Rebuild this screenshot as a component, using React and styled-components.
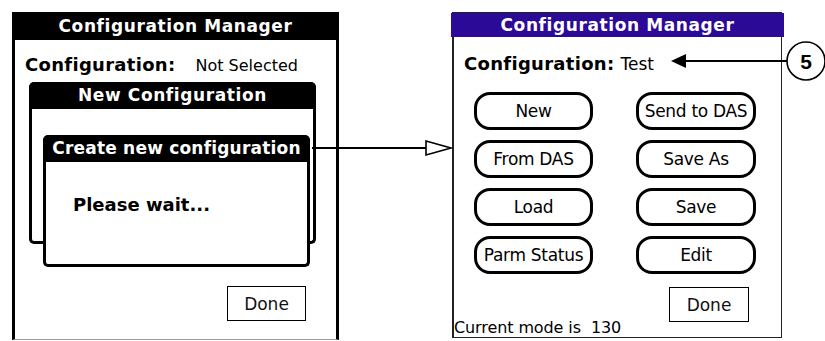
import React from 'react';
import styled, { createGlobalStyle } from 'styled-components';

const Global = createGlobalStyle`
  html, body {
    margin: 0;
    padding: 0;
    background: #fff;
  }
  body {
    font-family: "DejaVu Sans", "Liberation Sans", sans-serif;
    color: #000;
  }
`;

const Page = styled.div`
  position: relative;
  width: 825px;
  height: 341px;
  overflow: hidden;
  display: flex;
  align-items: flex-start;
  padding: 12px 0 0 12px;
  box-sizing: border-box;
  gap: 113px;
`;

const OldScreen = styled.div`
  width: 327px;
  height: 328px;
  box-sizing: border-box;
  border-left: 3px solid #000;
  border-right: 3px solid #000;
  border-bottom: 1px solid #9a9a9a;
  display: flex;
  flex-direction: column;
`;

const TitleBar = styled.div`
  height: ${(p) => p.$h}px;
  margin: 0 -3px;
  background: ${(p) => p.$bg};
  color: #fff;
  font-weight: bold;
  font-size: 17px;
  text-align: center;
  line-height: ${(p) => p.$h}px;
  letter-spacing: ${(p) => p.$ls ?? 0.6}px;
  white-space: nowrap;
  border-radius: ${(p) => (p.$round ? '5px 5px 0 0' : '0')};
`;

const ConfigRow = styled.div`
  display: flex;
  align-items: baseline;
  gap: ${(p) => p.$gap}px;
  padding-left: ${(p) => p.$pad}px;
  margin-top: ${(p) => p.$top}px;
  height: 20px;
`;

const Label = styled.span`
  font-weight: bold;
  font-size: 18px;
  letter-spacing: 0.3px;
`;

const Value = styled.span`
  font-size: ${(p) => p.$size || 16}px;
`;

const DialogStack = styled.div`
  position: relative;
  margin: 8px 0 0 14px;
  width: 287px;
  height: 185px;
`;

const Dialog = styled.div`
  box-sizing: border-box;
  display: flex;
  flex-direction: column;
  background: #fff;
  width: ${(p) => p.$w}px;
  height: ${(p) => p.$h}px;
  border-left: 3px solid #000;
  border-right: 3px solid #000;
  border-bottom: 3px solid #000;
  border-radius: 6px 6px 5px 5px;
`;

const FrontDialog = styled(Dialog)`
  position: absolute;
  left: 14px;
  top: 53px;
`;

const WaitText = styled.div`
  font-weight: bold;
  font-size: 18px;
  padding: 32px 0 0 27px;
`;

const DoneRow = styled.div`
  display: flex;
  justify-content: flex-end;
  padding-right: ${(p) => p.$right}px;
  margin-top: ${(p) => p.$top}px;
`;

const DoneButton = styled.div`
  width: ${(p) => p.$w}px;
  height: 35px;
  box-sizing: border-box;
  border: 1.5px solid #000;
  display: flex;
  align-items: center;
  justify-content: center;
  font-size: 17px;
  color: #111;
`;

const NewScreen = styled.div`
  width: 330px;
  height: 326px;
  box-sizing: border-box;
  border: 1px solid #222;
  border-left-width: 2px;
  display: flex;
  flex-direction: column;
`;

const ButtonGrid = styled.div`
  display: grid;
  grid-template-columns: 119px 120px;
  grid-auto-rows: 38px;
  column-gap: 43px;
  row-gap: 10px;
  padding-left: 20px;
  margin-top: 19px;
`;

const PillButton = styled.div`
  box-sizing: border-box;
  border: 3px solid #000;
  border-radius: 16px;
  display: flex;
  align-items: center;
  justify-content: center;
  font-size: 17px;
  letter-spacing: -0.3px;
  white-space: nowrap;
`;

const Footer = styled.div`
  display: flex;
  flex-direction: column;
`;

const Status = styled.div`
  font-size: 16px;
  margin-top: -4px;
  letter-spacing: -0.1px;
`;

const Overlay = styled.svg`
  position: absolute;
  left: 0;
  top: 0;
  pointer-events: none;
`;

const buttons = ['New', 'Send to DAS', 'From DAS', 'Save As', 'Load', 'Save', 'Parm Status', 'Edit'];

export default function App() {
  return (
    <>
      <Global />
      <Page>
        <OldScreen>
          <TitleBar $bg="#000" $h={28}>Configuration Manager</TitleBar>
          <ConfigRow $gap={20} $pad={10} $top={14}>
            <Label>Configuration:</Label>
            <Value>Not Selected</Value>
          </ConfigRow>
          <DialogStack>
            <Dialog $w={287} $h={162}>
              <TitleBar $bg="#000" $h={27} $round>New Configuration</TitleBar>
            </Dialog>
            <FrontDialog $w={267} $h={132}>
              <TitleBar $bg="#000" $h={27} $ls={0.2} $round>Create new configuration</TitleBar>
              <WaitText>Please wait...</WaitText>
            </FrontDialog>
          </DialogStack>
          <DoneRow $right={30} $top={19}>
            <DoneButton $w={79}>Done</DoneButton>
          </DoneRow>
        </OldScreen>

        <NewScreen>
          <TitleBar $bg="#2c0a98" $h={24}>Configuration Manager</TitleBar>
          <ConfigRow $gap={6} $pad={10} $top={16}>
            <Label>Configuration:</Label>
            <Value $size={17}>Test</Value>
          </ConfigRow>
          <ButtonGrid>
            {buttons.map((b) => (
              <PillButton key={b}>{b}</PillButton>
            ))}
          </ButtonGrid>
          <Footer>
            <DoneRow $right={32} $top={13}>
              <DoneButton $w={80}>Done</DoneButton>
            </DoneRow>
            <Status>Current mode is&nbsp;&nbsp;130</Status>
          </Footer>
        </NewScreen>

        <Overlay width="825" height="341" viewBox="0 0 825 341">
          <line x1="312" y1="148" x2="426" y2="148" stroke="#000" strokeWidth="2" />
          <polygon points="426,141 451,148 426,155" fill="#fff" stroke="#000" strokeWidth="1.6" />
          <line x1="684" y1="61" x2="787" y2="61" stroke="#000" strokeWidth="2" />
          <polygon points="671,61 686,54 686,68" fill="#000" />
          <circle cx="806" cy="61" r="19" fill="#fff" stroke="#000" strokeWidth="1.6" />
          <text x="806" y="69" textAnchor="middle" fontFamily="Liberation Sans, sans-serif" fontWeight="bold" fontSize="21">5</text>
        </Overlay>
      </Page>
    </>
  );
}
